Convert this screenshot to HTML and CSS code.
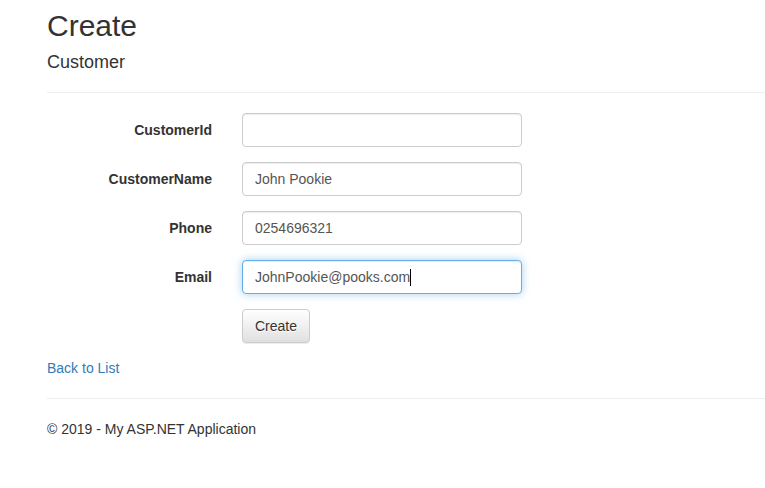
FILE: index.html
```html
<!DOCTYPE html>
<html lang="en">
<head>
<meta charset="utf-8">
<title>Create - My ASP.NET Application</title>
<link rel="stylesheet" href="styles.css">
</head>
<body>
<div class="container">
  <h2 class="title">Create</h2>
  <form class="form-horizontal">
    <h4 class="subtitle">Customer</h4>
    <hr class="rule">
    <div class="form-group">
      <label class="control-label" for="CustomerId">CustomerId</label>
      <div class="field">
        <input class="form-control" type="text" id="CustomerId" value="">
      </div>
    </div>
    <div class="form-group">
      <label class="control-label" for="CustomerName">CustomerName</label>
      <div class="field">
        <input class="form-control" type="text" id="CustomerName" value="John Pookie">
      </div>
    </div>
    <div class="form-group">
      <label class="control-label" for="Phone">Phone</label>
      <div class="field">
        <input class="form-control" type="text" id="Phone" value="0254696321">
      </div>
    </div>
    <div class="form-group">
      <label class="control-label" for="Email">Email</label>
      <div class="field field-caret">
        <input class="form-control is-focused" type="text" id="Email" value="JohnPookie@pooks.com">
        <span class="caret-mirror" aria-hidden="true"><span class="mirror-text">JohnPookie@pooks.com</span><span class="caret"></span></span>
      </div>
    </div>
    <div class="form-group">
      <div class="offset"></div>
      <div class="field">
        <button type="button" class="btn">Create</button>
      </div>
    </div>
  </form>
  <div class="back"><a href="#">Back to List</a></div>
  <hr class="rule">
  <footer class="footer">
    <p>&copy; 2019 - My ASP.NET Application</p>
  </footer>
</div>
</body>
</html>
```

FILE: styles.css
```css
* {
  box-sizing: border-box;
}

html, body {
  margin: 0;
  padding: 0;
  overflow: hidden;
}

body {
  font-family: "Liberation Sans", Arial, sans-serif;
  font-size: 14px;
  line-height: 20px;
  color: #333;
  background: #fff;
}

.container {
  padding: 9px 0 0 47px;
}

.title {
  margin: 0;
  font-size: 30px;
  line-height: 33px;
  font-weight: 500;
}

.form-horizontal {
  margin: 0;
}

.subtitle {
  margin: 10px 0 0;
  font-size: 18px;
  line-height: 20px;
  font-weight: 500;
}

.rule {
  margin: 20px 0 0;
  border: 0;
  border-top: 1px solid #eee;
  height: 0;
}

.form-horizontal .rule {
  margin-bottom: 20px;
}

.form-group {
  display: flex;
  gap: 30px;
  margin-bottom: 15px;
}

.control-label,
.offset {
  width: 165px;
  flex: none;
}

.control-label {
  text-align: right;
  font-weight: bold;
  padding-top: 7px;
}

.field {
  width: 280px;
  flex: none;
}

.field-caret {
  position: relative;
}

.form-control {
  display: block;
  width: 280px;
  height: 34px;
  padding: 6px 12px;
  margin: 0;
  font-family: "Liberation Sans", Arial, sans-serif;
  font-size: 14px;
  line-height: 20px;
  color: #555;
  background: #fff;
  border: 1px solid #ccc;
  border-radius: 4px;
  box-shadow: inset 0 1px 1px rgba(0, 0, 0, 0.075);
  outline: none;
}

.form-control.is-focused {
  border-color: #66afe9;
  box-shadow: inset 0 1px 1px rgba(0, 0, 0, 0.075), 0 0 8px rgba(102, 175, 233, 0.6);
}

.caret-mirror {
  position: absolute;
  left: 13px;
  top: 7px;
  font-size: 14px;
  line-height: 20px;
  white-space: nowrap;
  pointer-events: none;
}

.mirror-text {
  visibility: hidden;
}

.caret {
  display: inline-block;
  width: 1px;
  height: 17px;
  background: #000;
  vertical-align: -4px;
}

.btn {
  display: inline-block;
  height: 34px;
  padding: 6px 12px;
  font-family: "Liberation Sans", Arial, sans-serif;
  font-size: 14px;
  line-height: 20px;
  color: #333;
  text-shadow: 0 1px 0 #fff;
  background: linear-gradient(to bottom, #fff 0, #e0e0e0 100%);
  border: 1px solid #ccc;
  border-radius: 4px;
  box-shadow: inset 0 1px 0 rgba(255, 255, 255, 0.15), 0 1px 1px rgba(0, 0, 0, 0.075);
  cursor: pointer;
}

.back a {
  color: #337ab7;
  text-decoration: none;
}

.footer p {
  margin: 20px 0 10px;
}
```
